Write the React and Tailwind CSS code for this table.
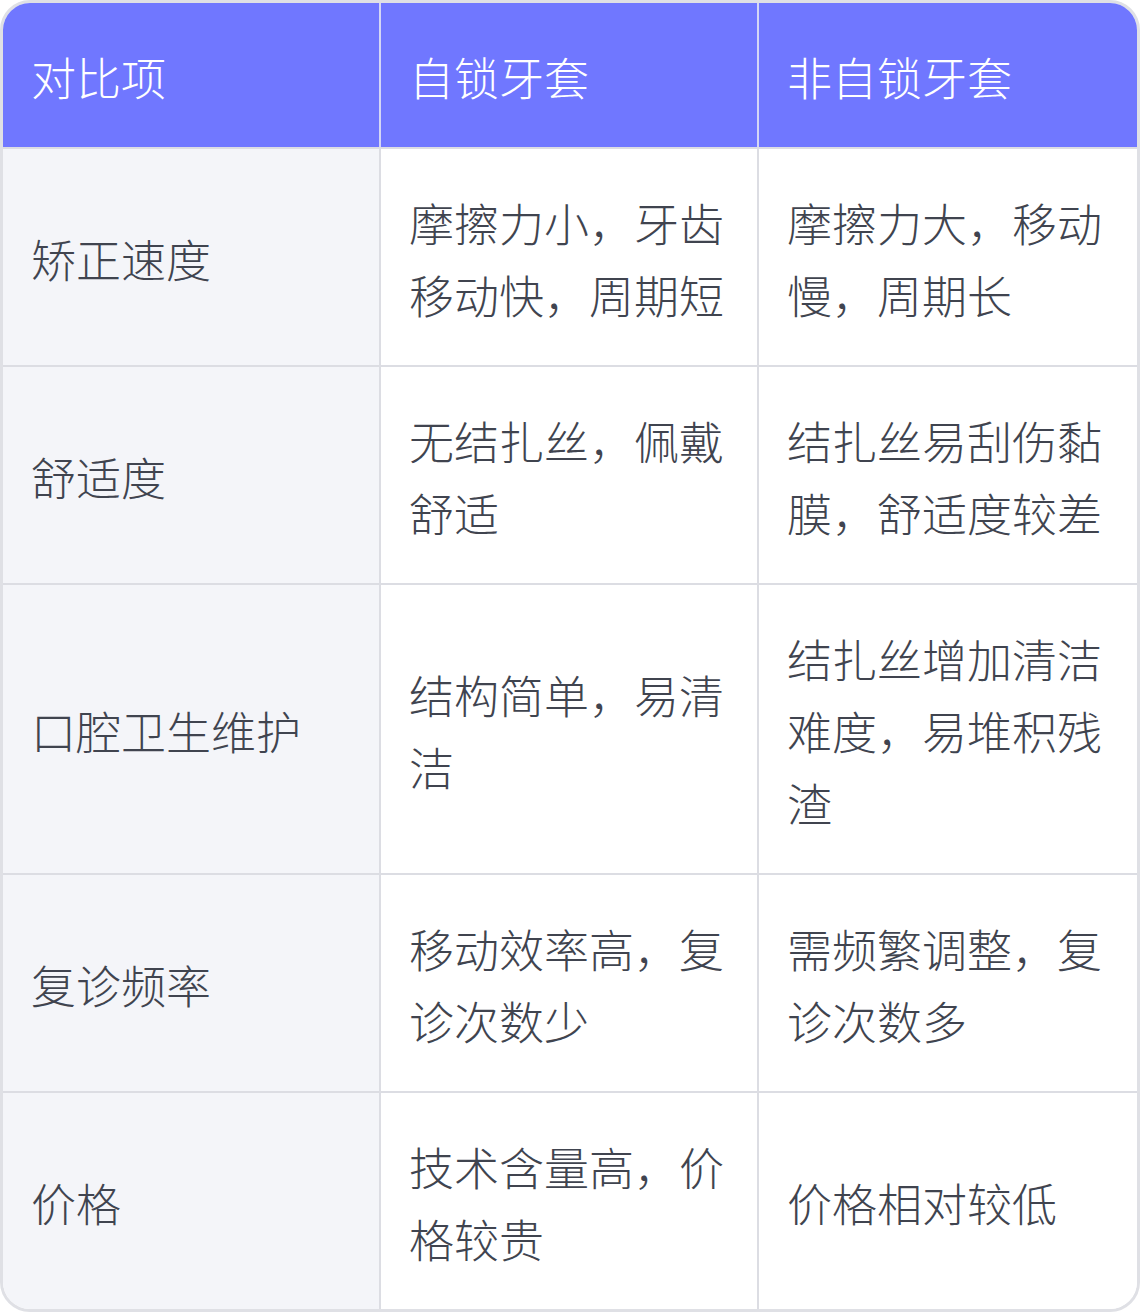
import React from 'react';

const headers = ['对比项', '自锁牙套', '非自锁牙套'];

const rows = [
  ['矫正速度', '摩擦力小，牙齿移动快，周期短', '摩擦力大，移动慢，周期长'],
  ['舒适度', '无结扎丝，佩戴舒适', '结扎丝易刮伤黏膜，舒适度较差'],
  ['口腔卫生维护', '结构简单，易清洁', '结扎丝增加清洁难度，易堆积残渣'],
  ['复诊频率', '移动效率高，复诊次数少', '需频繁调整，复诊次数多'],
  ['价格', '技术含量高，价格较贵', '价格相对较低'],
];

function App() {
  return (
    <div
      className="w-[1140px] h-[1312px] bg-white"
      style={{ fontFamily: '"Noto Sans CJK SC", "Noto Sans", sans-serif' }}
    >
      <div className="rounded-[30px] border-[3px] border-[#dfe0e5] overflow-hidden">
        {/* Header */}
        <div className="grid grid-cols-3 bg-[#7077ff] border-b-2 border-[#dcdde3]">
          {headers.map((h, i) => (
            <div
              key={h}
              className={`px-[28px] pt-[38px] pb-[34px] text-[45px] leading-[72px] font-light text-white ${i < 2 ? 'border-r-2 border-[#d4d6f5]' : ''}`}
            >
              {h}
            </div>
          ))}
        </div>

        {/* Body */}
        {rows.map((row, r) => (
          <div
            key={row[0]}
            className={`grid grid-cols-3 ${r < rows.length - 1 ? 'border-b-2 border-[#dcdde3]' : ''}`}
          >
            {row.map((cell, i) => (
              <div
                key={i}
                className={`flex items-center px-[28px] pt-[38px] pb-[34px] text-[45px] leading-[72px] font-light text-[#40444f] ${i === 0 ? 'bg-[#f4f5f9]' : 'bg-white'} ${i < 2 ? 'border-r-2 border-[#dcdde3]' : ''}`}
              >
                <span>{cell}</span>
              </div>
            ))}
          </div>
        ))}
      </div>
    </div>
  );
}

export default App;
